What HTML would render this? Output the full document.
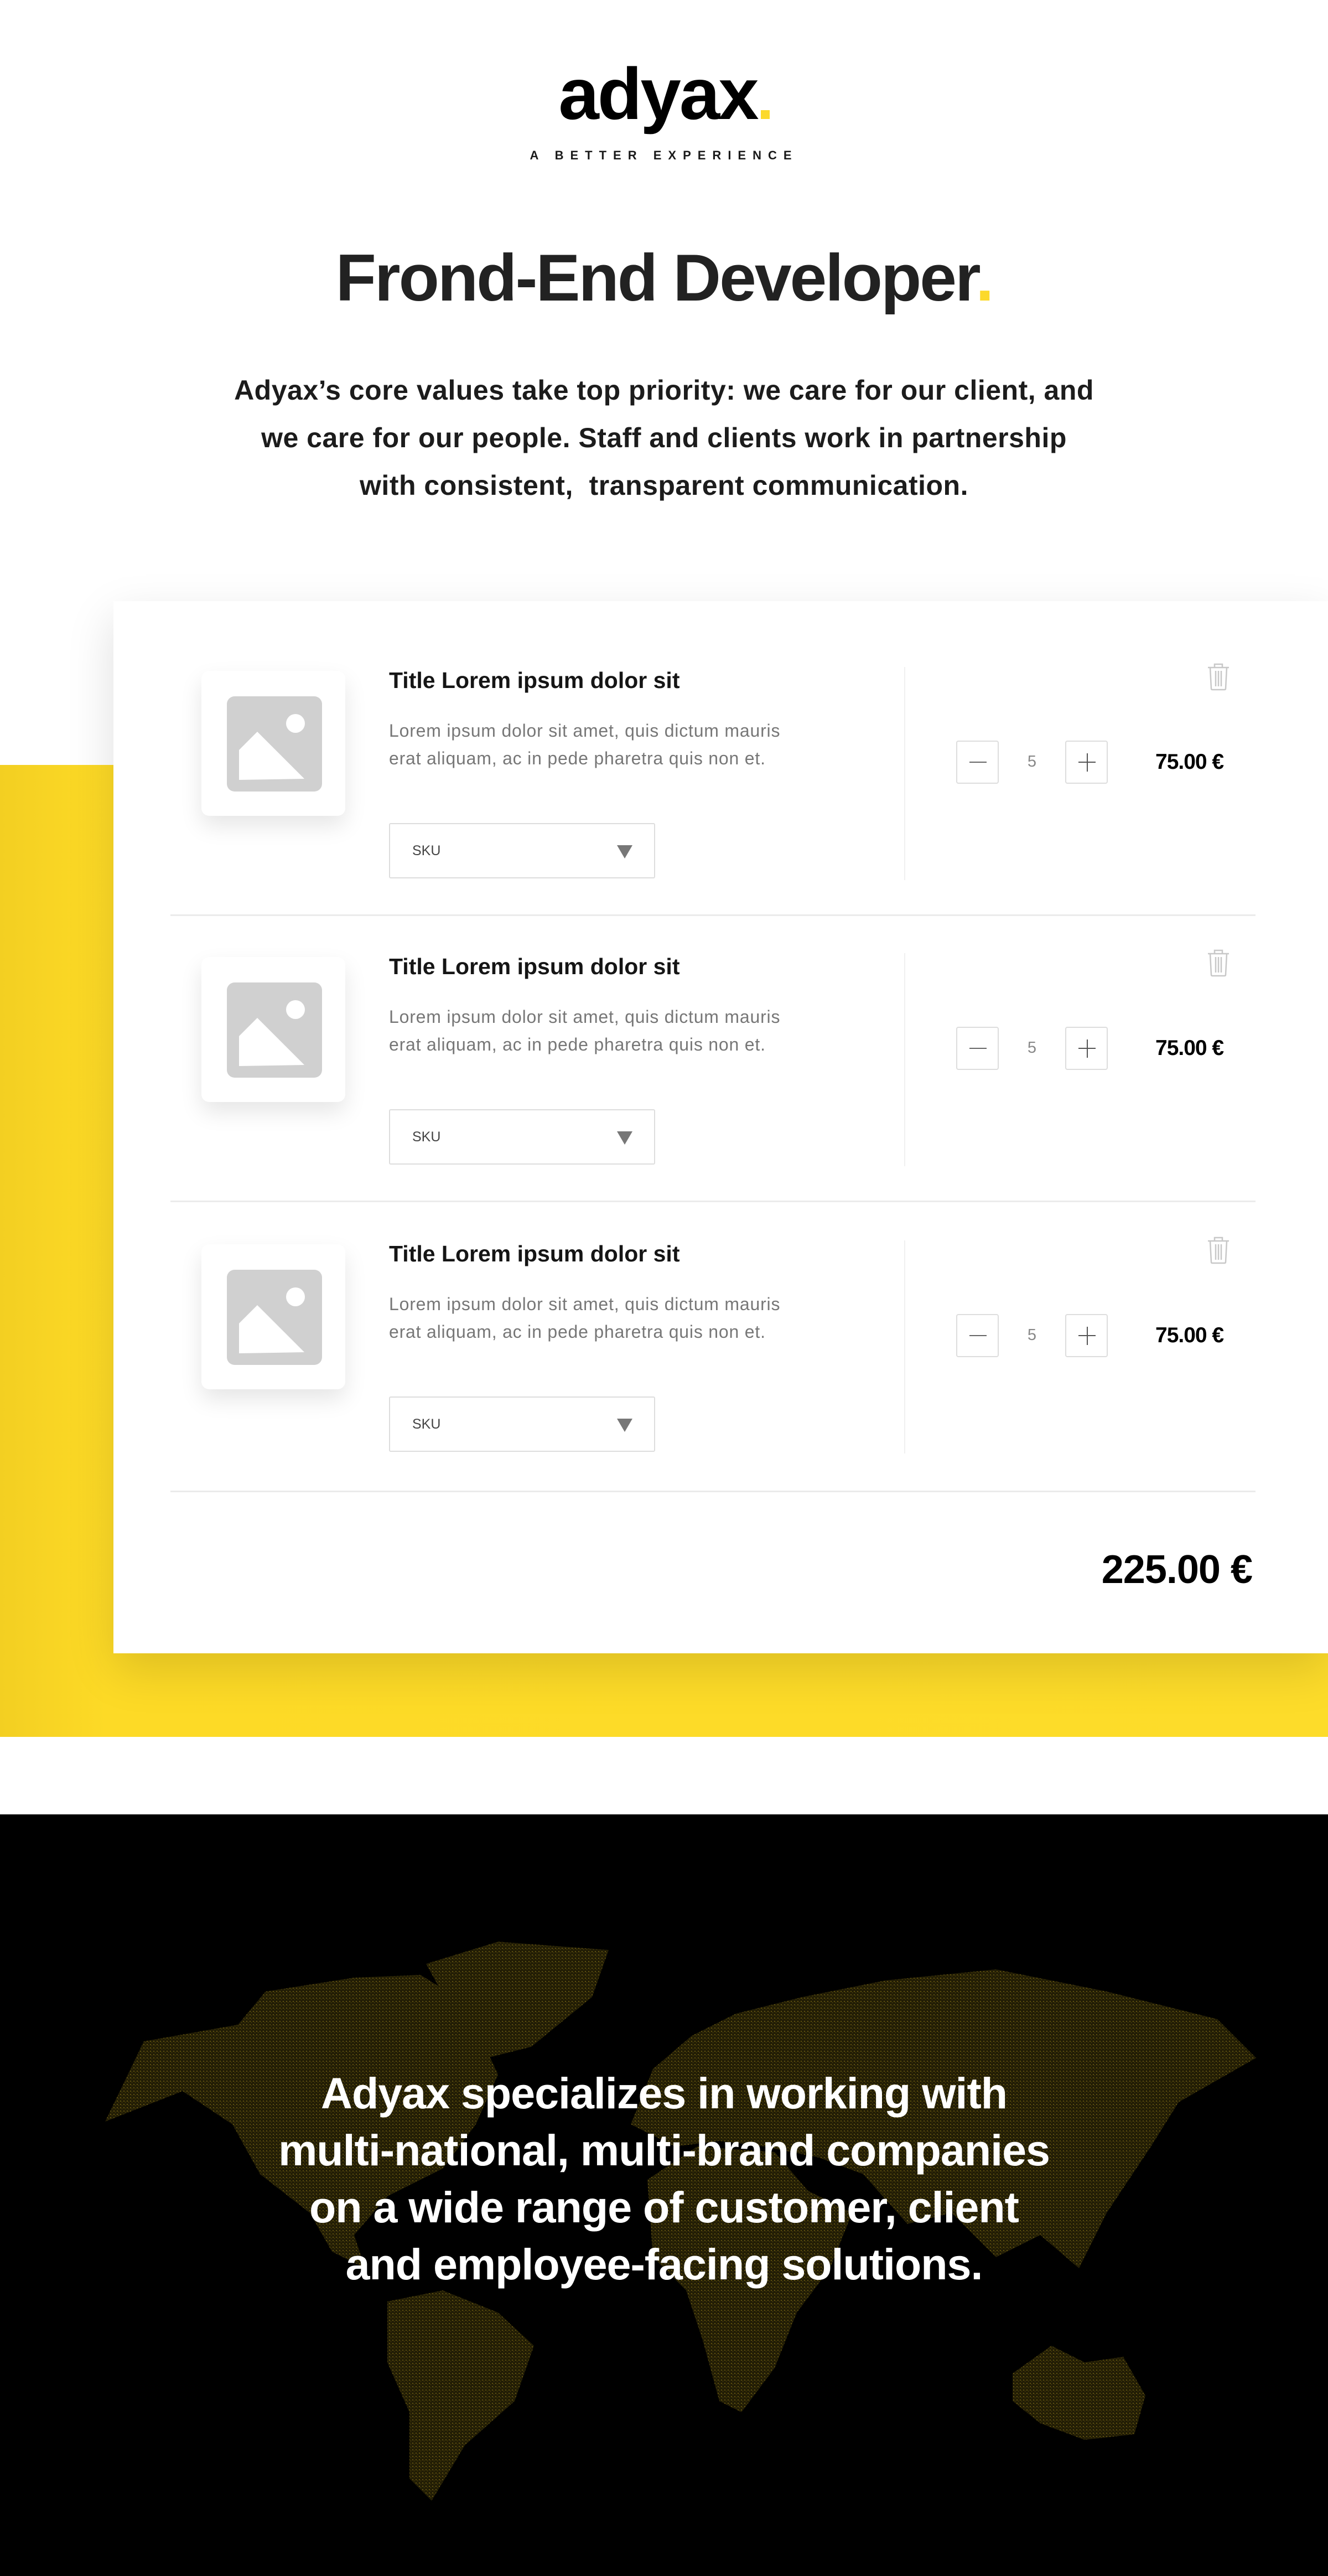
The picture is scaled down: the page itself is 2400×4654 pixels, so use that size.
<!DOCTYPE html>
<html><head><meta charset="utf-8">
<style>
*{margin:0;padding:0;box-sizing:border-box}
html,body{width:2400px;height:4654px;background:#fff;overflow:hidden;font-family:"Liberation Sans",sans-serif;position:relative}
.abs{position:absolute}
.logo{left:0;width:2400px;top:104px;text-align:center;font-size:132px;font-weight:bold;letter-spacing:-3px;color:#000;line-height:1}
.logo span{display:inline-block;width:16px;height:16px;background:#fcd92b;margin-left:6px}
.tag{left:0;width:2400px;top:268px;text-align:center;font-size:22px;font-weight:bold;letter-spacing:12px;color:#1a1a1a}
h1{position:absolute;left:0;width:2400px;top:436px;text-align:center;font-size:120px;font-weight:bold;letter-spacing:-3px;color:#222;line-height:1.1}
h1 i{font-style:normal;color:#fcd92b}
.intro{left:0;width:2400px;top:662px;text-align:center;font-size:50px;font-weight:bold;color:#1c1c1c;line-height:86px;letter-spacing:0.5px}
.yellow{left:0;top:1382px;width:2400px;height:1756px;background:linear-gradient(90deg,#f3cf22 0,#fdda26 8%,#fddc2a 100%)}
.card{left:205px;top:1086px;width:2195px;height:1901px;background:#fff;box-shadow:0 30px 80px rgba(0,0,0,0.13)}
.thumb{width:260px;height:262px;background:#fff;border-radius:14px;box-shadow:0 18px 40px rgba(0,0,0,0.10)}
.title{font-size:41px;font-weight:bold;color:#151515}
.desc{font-size:32px;color:#777;line-height:50px;letter-spacing:0.8px}
.sel{width:481px;height:100px;border:2px solid #ddd;border-radius:3px}
.sel b{position:absolute;left:40px;top:34px;font-size:25px;font-weight:normal;color:#444}
.sel i{position:absolute;left:410px;top:38px;width:0;height:0;border-left:14px solid transparent;border-right:14px solid transparent;border-top:24px solid #777}
.div{width:2px;background:#f0f0f0;height:385px}
.sep{left:308px;width:1961px;height:3px;background:#ebebeb}
.qb{width:77px;height:78px;border:2px solid #ddd;border-radius:4px}
.num{font-size:29px;color:#888;width:40px;text-align:center}
.price{font-size:39px;font-weight:bold;color:#000;letter-spacing:-1px}
.black{left:0;top:3278px;width:2400px;height:1376px;background:#000;overflow:hidden}
.btxt{left:0;width:2400px;top:3730px;text-align:center;font-size:79px;font-weight:bold;color:#fff;line-height:103px;letter-spacing:-1px}
</style></head><body>
<div class="abs logo">adyax<span></span></div>
<div class="abs tag">A BETTER EXPERIENCE</div>
<h1>Frond-End Developer<i>.</i></h1>
<div class="abs intro">Adyax’s core values take top priority: we care for our client, and<br>we care for our people. Staff and clients work in partnership<br>with consistent,&nbsp; transparent communication.</div>
<div class="abs yellow"></div>
<div class="abs card"></div>

<div id="rows"></div>
<script>
var h='';
[0,517,1036].forEach(function(o){
h+='<div class="abs thumb" style="left:364px;top:'+(1212+o)+'px"></div>';
h+='<svg class="abs" style="left:410px;top:'+(1258+o)+'px" width="172" height="172" viewBox="0 0 172 172"><rect width="172" height="172" rx="14" fill="#d0d0d0"/><ellipse cx="124" cy="49" rx="17" ry="17" fill="#fff"/><polygon points="55,64 140,149 22,151 22,97" fill="#fff"/></svg>';
h+='<div class="abs title" style="left:703px;top:'+(1206+o)+'px">Title Lorem ipsum dolor sit</div>';
h+='<div class="abs desc" style="left:703px;top:'+(1295+o)+'px">Lorem ipsum dolor sit amet, quis dictum mauris<br>erat aliquam, ac in pede pharetra quis non et.</div>';
h+='<div class="abs sel" style="left:703px;top:'+(1487+o)+'px"><b>SKU</b><i></i></div>';
h+='<div class="abs div" style="left:1634px;top:'+(1205+o)+'px"></div>';
h+='<div class="abs qb" style="left:1728px;top:'+(1338+o)+'px"><div class="abs" style="left:22px;top:36px;width:31px;height:2px;background:#666"></div></div>';
h+='<div class="abs num" style="left:1845px;top:'+(1360+o)+'px">5</div>';
h+='<div class="abs qb" style="left:1925px;top:'+(1338+o)+'px"><div class="abs" style="left:22px;top:36px;width:31px;height:2px;background:#555"></div><div class="abs" style="left:37px;top:21px;width:2px;height:33px;background:#555"></div></div>';
h+='<div class="abs price" style="left:2088px;top:'+(1355+o)+'px">75.00 €</div>';
h+='<svg class="abs" style="left:2180px;top:'+(1198+o)+'px" width="44" height="50" viewBox="0 0 44 50" fill="none" stroke="#c8c8c8" stroke-width="2.5"><path d="M3 8H41M15 8V2H29V8M7 8L9 46Q9 48 11 48H33Q35 48 35 46L37 8M17 14V42M22 14V42M27 14V42"/></svg>';
if(o<1036) h+='<div class="abs sep" style="top:'+(1652+o)+'px"></div>';
});
h+='<div class="abs sep" style="top:2693px"></div>';
document.getElementById('rows').innerHTML=h;
</script>
<div class="abs" style="right:137px;top:2795px;font-size:72px;font-weight:bold;color:#000;letter-spacing:-1px">225.00 €</div>

<div class="abs black">
<svg width="2400" height="1376" viewBox="0 0 2400 1376">
<defs><pattern id="d" width="6" height="6" patternUnits="userSpaceOnUse"><rect width="6" height="6" fill="#221d05"/><rect x="1" y="1" width="2" height="2" fill="#5f5110"/><rect x="4" y="3" width="1" height="2" fill="#4d410c"/></pattern></defs>
<g fill="url(#d)">
<path d="M190 555 L260 410 L430 380 L480 320 L640 295 L760 290 L840 340 L900 470 L860 560 L800 640 L700 690 L640 760 L660 820 L600 790 L560 720 L470 650 L420 560 L330 500Z"/>
<path d="M770 270 L900 230 L1100 245 L1070 330 L960 420 L880 440 L820 360Z"/>
<path d="M700 880 L800 860 L900 900 L965 960 L930 1060 L840 1140 L780 1240 L740 1200 L740 1080 L700 990Z"/>
<path d="M1140 560 L1180 460 L1250 400 L1330 360 L1450 330 L1600 300 L1800 280 L2000 320 L2200 370 L2270 440 L2200 480 L2130 520 L2080 600 L2000 720 L1950 820 L1880 760 L1800 800 L1720 720 L1640 740 L1560 650 L1480 620 L1380 600 L1300 590 L1220 600Z"/>
<path d="M1170 660 L1260 600 L1400 610 L1460 680 L1540 720 L1500 820 L1440 900 L1400 1000 L1340 1080 L1300 1060 L1270 950 L1240 860 L1180 800Z"/>
<path d="M1830 1010 L1900 960 L1960 990 L2030 980 L2070 1050 L2050 1120 L1960 1130 L1880 1100 L1830 1060Z"/>
</g></svg>
</div>
<div class="abs btxt">Adyax specializes in working with<br>multi-national, multi-brand companies<br>on a wide range of customer, client<br>and employee-facing solutions.</div>
</body></html>
